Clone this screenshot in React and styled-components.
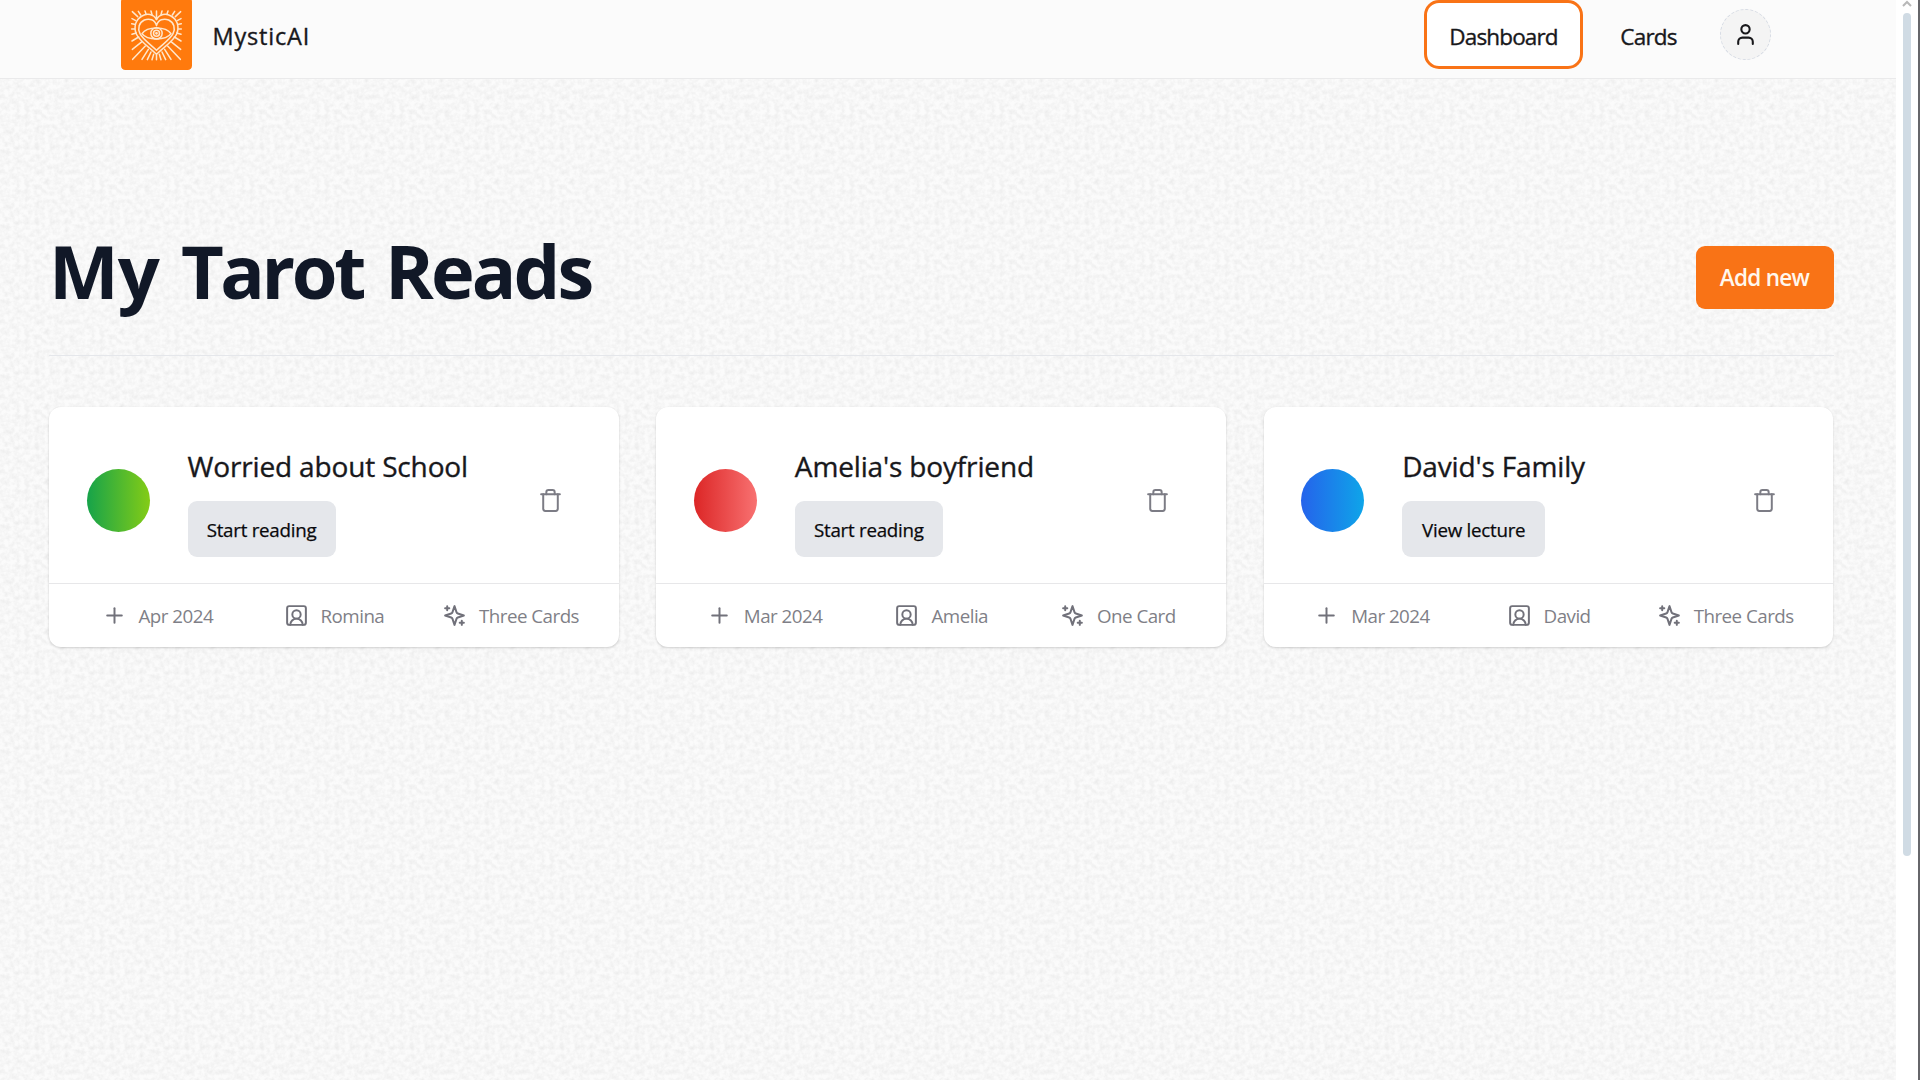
import React from "react";
import styled, { createGlobalStyle } from "styled-components";
import { Trash, Plus, SquareUserRound, User } from "lucide-react";

const grain = `url("data:image/svg+xml,${encodeURIComponent(
  `<svg xmlns='http://www.w3.org/2000/svg' width='75' height='75'><filter id='n' x='0' y='0' width='100%' height='100%' color-interpolation-filters='sRGB'><feTurbulence type='fractalNoise' baseFrequency='0.2' numOctaves='3' seed='8' stitchTiles='stitch'/><feColorMatrix values='0 0 0 0 0  0 0 0 0 0  0 0 0 0 0  0.1 0 0 0 -0.033'/></filter><rect width='75' height='75' filter='url(#n)'/></svg>`
)}")`;

const GlobalStyle = createGlobalStyle`
  *, *::before, *::after { box-sizing: border-box; }
  body {
    margin: 0;
    overflow: hidden;
    background: #fff;
    color: #18181b;
    font-family: "Open Sans", "Noto Sans", sans-serif;
  }
  h1, h2, p { margin: 0; }
  button { font: inherit; color: inherit; border: 0; }
`;

const Window = styled.div`
  display: flex;
  width: 1920px;
  height: 1080px;
  background: #fff;
`;

const Page = styled.div`
  width: 1896px;
  height: 100%;
  background-color: #fbfbfb;
  background-image: ${grain};
`;

const Header = styled.header`
  display: flex;
  align-items: center;
  justify-content: space-between;
  height: 79px;
  padding: 0 125px 9px 120.5px;
  background: #fbfbfb;
  border-bottom: 1px solid #eaeaeb;
`;

const Brand = styled.div`
  display: flex;
  align-items: center;
  gap: 21px;
`;

const Label = styled.span`
  padding-top: ${(p) => (p.$size ? 3 : 4)}px;
  font-size: ${(p) => p.$size || 22.5}px;
  font-weight: 500;
  line-height: 32px;
  letter-spacing: ${(p) => p.$track || 0}px;
  white-space: nowrap;
  -webkit-text-stroke: 0.35px currentColor;
`;

const Nav = styled.nav`
  display: flex;
  align-items: center;
`;

const NavItem = styled.a`
  display: flex;
  align-items: center;
  justify-content: center;
  width: ${(p) => p.$width}px;
  height: 69px;
  border: 3px solid ${(p) => (p.$active ? "#f97316" : "transparent")};
  border-radius: 15px;
  background: ${(p) => (p.$active ? "#fff" : "transparent")};
`;

const Avatar = styled.button`
  display: flex;
  align-items: center;
  justify-content: center;
  width: 51px;
  height: 51px;
  margin-left: 6px;
  padding: 0;
  border: 1px dashed #d5dae3;
  border-radius: 50%;
  background: #f4f4f4;
`;

const Main = styled.main`
  padding: 155px 62.5px 0 49px;
`;

const Heading = styled.div`
  display: flex;
  align-items: flex-start;
  justify-content: space-between;
  height: 122px;
  border-bottom: 1px solid #e5e7eb;
`;

const Title = styled.h1`
  display: flex;
  gap: 22px;
  margin-top: -13px;
  color: #111827;
  font-size: 74px;
  font-weight: 700;
  line-height: 100px;
`;

const TitleWord = styled.span`
  letter-spacing: ${(p) => p.$track}px;
`;

const AddButton = styled.button`
  width: 138px;
  height: 63px;
  margin-top: 12px;
  padding: 0;
  border-radius: 9px;
  background: #f97316;
  color: #fff7ed;
  font-size: 22.5px;
  font-weight: 600;
  letter-spacing: -0.7px;
`;

const CardGrid = styled.section`
  display: grid;
  grid-template-columns: repeat(3, 1fr);
  gap: 37.5px;
  margin-top: 51px;
`;

const Card = styled.article`
  height: 240px;
  border-radius: 12px;
  background: #fff;
  box-shadow: 0 1px 3px rgba(0, 0, 0, 0.12), 0 1px 2px rgba(0, 0, 0, 0.06);
`;

const CardTop = styled.div`
  display: flex;
  align-items: center;
  height: 176px;
  padding: 11px 56px 0 37.5px;
`;

const Orb = styled.div`
  width: 63px;
  height: 63px;
  border-radius: 50%;
  background: linear-gradient(to right, ${(p) => p.$from}, ${(p) => p.$to});
`;

const CardBody = styled.div`
  flex: 1;
  margin-left: 38px;
  padding-top: 2px;
`;

const CardTitle = styled.h2`
  height: 54px;
  font-size: 28px;
  font-weight: 500;
  line-height: 38px;
  letter-spacing: -0.15px;
  white-space: nowrap;
  -webkit-text-stroke: 0.35px currentColor;
`;

const ReadButton = styled.button`
  display: block;
  width: ${(p) => p.$width}px;
  height: 56px;
  padding: 2px 0 0;
  border-radius: 9px;
  background: #e5e7eb;
  color: #09090b;
  font-size: 18.75px;
  font-weight: 500;
  letter-spacing: -0.26px;
  -webkit-text-stroke: 0.25px currentColor;
`;

const CardFooter = styled.footer`
  display: grid;
  grid-template-columns: repeat(3, 1fr);
  height: 64px;
  padding: 0 20px 1px;
  border-top: 1px solid #e7e7e9;
`;

const Meta = styled.div`
  display: flex;
  align-items: center;
  justify-content: center;
  gap: 12px;
  font-size: 18.75px;
  color: #71717a;
`;

const MetaText = styled.span`
  color: #7f7f87;
  letter-spacing: -0.52px;
  white-space: nowrap;
`;

const Scrollbar = styled.aside`
  display: flex;
  flex-direction: column;
  align-items: center;
  width: 24px;
  height: 100%;
  border-right: 2px solid #66666a;
`;

const Thumb = styled.div`
  width: 8px;
  height: 843px;
  margin-top: 3px;
  border-radius: 4px;
  background: #d0dbe4;
`;

function Sparkle() {
  return (
    <svg width="25" height="25" viewBox="0 0 24 24" fill="none" stroke="currentColor" strokeWidth="1.9" strokeLinecap="round" strokeLinejoin="round">
      <path d="m12 3-1.912 5.813a2 2 0 0 1-1.275 1.275L3 12l5.813 1.912a2 2 0 0 1 1.275 1.275L12 21l1.912-5.813a2 2 0 0 1 1.275-1.275L21 12l-5.813-1.912a2 2 0 0 1-1.275-1.275L12 3Z" />
      <path d="M5 3v4M19 17v4M3 5h4M17 19h4" />
    </svg>
  );
}

const leftRays =
  "M47 35L63 50M65 34L72 45M85 33L88 42M103 33L106 44M46 56L56 61M45 71L53 73M45 87L54 87M46 103L59 99M46 123L66 111M47 148L76 125M48 178L86 138M76 178L95 148M92 179L103 156M106 179L111 163";

function Logo() {
  return (
    <svg width="71" height="70" viewBox="13 0 213 210" fill="none" stroke="#ffe6cb" strokeWidth="4.6" strokeLinecap="round" strokeLinejoin="round">
      <rect x="13" y="-8" width="213" height="218" rx="13" fill="#ff7a0d" stroke="none" />
      <path d={leftRays} />
      <path d={leftRays} transform="matrix(-1 0 0 1 239 0)" />
      <path d="M119.500 33V58M119.500 164V179" />
      <path d="M119.500 59C111 42 91 39 76 48C57 59 50 80 59 102C69 124 99 142 119.500 163C140 142 170 124 180 102C189 80 182 59 163 48C148 39 128 42 119.500 59Z" />
      <path d="M119.500 77C115 59 98 54 83 60C67 68 62 84 70 101C79 119 103 134 119.500 151C136 134 160 119 169 101C177 84 172 68 156 60C141 54 124 59 119.500 77Z" />
      <path d="M76 101C91 78 148 78 163 101C148 122 91 122 76 101Z" />
      <circle cx="119.500" cy="100" r="17" />
      <circle cx="119.500" cy="100" r="9" />
      <circle cx="119.500" cy="100" r="2" />
    </svg>
  );
}

const cards = [
  { title: "Worried about School", from: "#16a34a", to: "#84cc16", action: "Start reading", width: 148, date: "Apr 2024", name: "Romina", spread: "Three Cards" },
  { title: "Amelia's boyfriend", from: "#dc2626", to: "#f87171", action: "Start reading", width: 148, date: "Mar 2024", name: "Amelia", spread: "One Card" },
  { title: "David's Family", from: "#2563eb", to: "#0ea5e9", action: "View lecture", width: 143, date: "Mar 2024", name: "David", spread: "Three Cards" },
];

export default function App() {
  return (
    <Window>
      <GlobalStyle />
      <Page>
        <Header>
          <Brand>
            <Logo />
            <Label $size={23.5} $track={0.8}>MysticAI</Label>
          </Brand>
          <Nav>
            <NavItem $active $width={159}><Label $track={-0.85}>Dashboard</Label></NavItem>
            <NavItem $width={131}><Label $track={-0.8}>Cards</Label></NavItem>
            <Avatar><User size={25} strokeWidth={2} /></Avatar>
          </Nav>
        </Header>
        <Main>
          <Heading>
            <Title>
              <TitleWord $track={-1}>My</TitleWord>{" "}
              <TitleWord $track={-3.4}>Tarot</TitleWord>{" "}
              <TitleWord $track={-2.9}>Reads</TitleWord>
            </Title>
            <AddButton>Add new</AddButton>
          </Heading>
          <CardGrid>
            {cards.map((c) => (
              <Card key={c.title}>
                <CardTop>
                  <Orb $from={c.from} $to={c.to} />
                  <CardBody>
                    <CardTitle>{c.title}</CardTitle>
                    <ReadButton $width={c.width}>{c.action}</ReadButton>
                  </CardBody>
                  <Trash size={25} strokeWidth={1.9} color="#7c7c85" />
                </CardTop>
                <CardFooter>
                  <Meta><Plus size={25} strokeWidth={1.9} /><MetaText>{c.date}</MetaText></Meta>
                  <Meta><SquareUserRound size={25} strokeWidth={1.9} /><MetaText>{c.name}</MetaText></Meta>
                  <Meta><Sparkle /><MetaText>{c.spread}</MetaText></Meta>
                </CardFooter>
              </Card>
            ))}
          </CardGrid>
        </Main>
      </Page>
      <Scrollbar>
        <svg width="10" height="10" viewBox="0 0 10 10" fill="none" stroke="#b8b8b8" strokeWidth="2"><path d="M1 6l4-4 4 4" /></svg>
        <Thumb />
      </Scrollbar>
    </Window>
  );
}
